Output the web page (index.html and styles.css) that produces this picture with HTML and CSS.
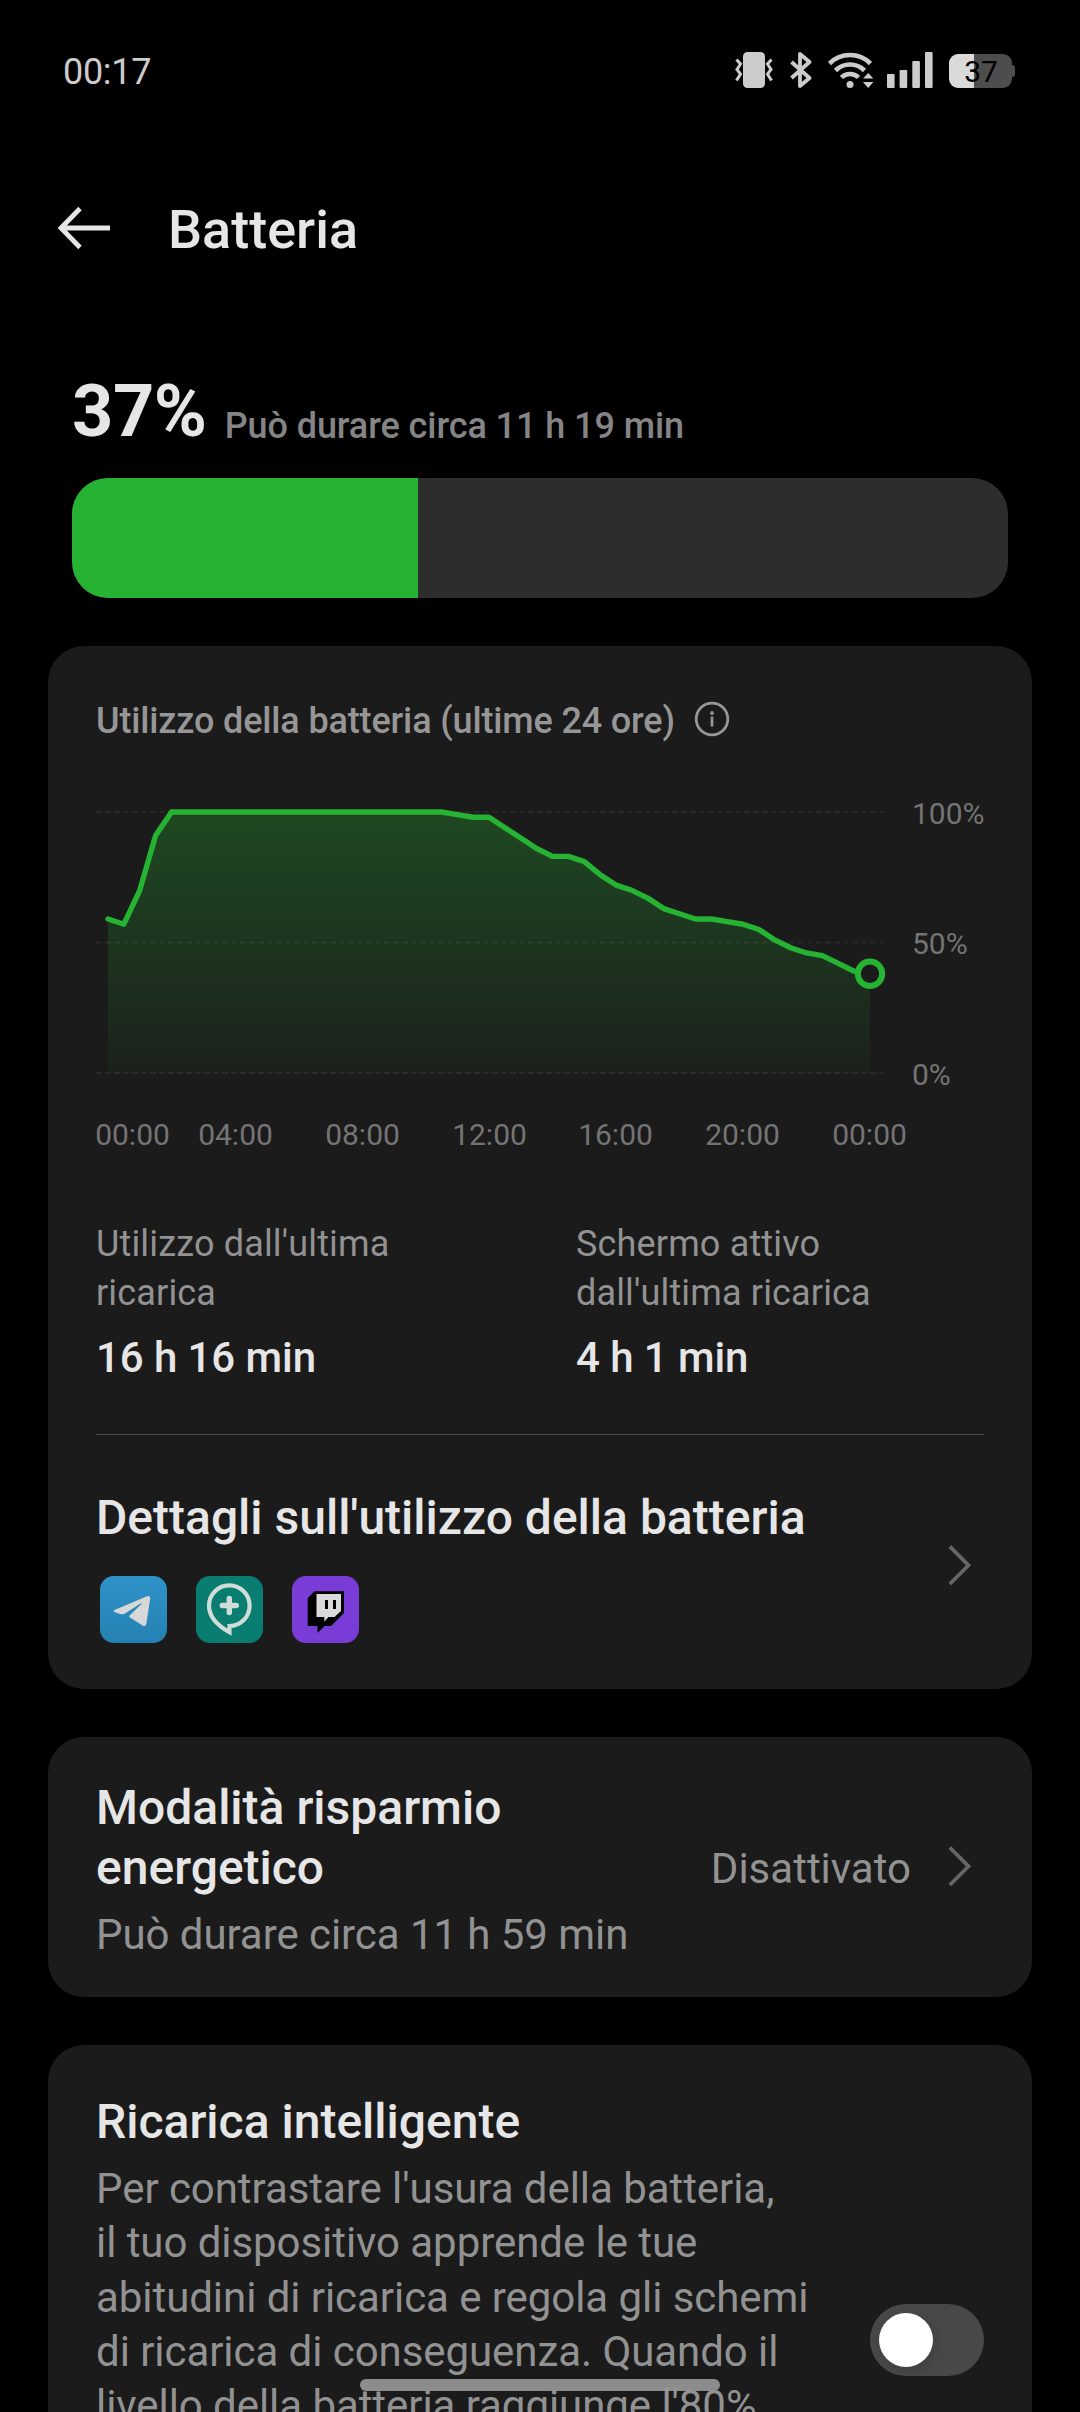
FILE: index.html
```
<!DOCTYPE html>
<html lang="it">
<head>
  <meta charset="UTF-8" />
  <meta name="viewport" content="width=device-width, initial-scale=1" />
  <title>Batteria</title>
  <link rel="stylesheet" href="styles.css">
</head>

<body>
<div class="screen">

  <!-- ========== STATUS BAR ========== -->
  <div class="status-bar">
    <span class="clock">00:17</span>
    <div class="status-icons">
      <svg class="ic-vibrate" width="38" height="36" viewBox="0 0 38 36">
        <rect x="8" y="0" width="22" height="36" rx="4.5" fill="#ccc"/>
        <path d="M1.500 7.500 L5.500 12 L2 17.500 L5.500 22 L1.500 28.500" fill="none" stroke="#ccc" stroke-width="3"/>
        <path d="M36.500 7.500 L32.500 12 L36 17.500 L32.500 22 L36.500 28.500" fill="none" stroke="#ccc" stroke-width="3"/>
      </svg>
      <svg class="ic-bluetooth" width="22" height="36" viewBox="0 0 22 36">
        <path d="M1.500 10 L19.500 26 L10 34 V2 L19.500 10 L1.500 26" fill="none" stroke="#ccc" stroke-width="3.800" stroke-linejoin="round"/>
      </svg>
      <svg class="ic-wifi" width="46" height="36" viewBox="0 0 46 36">
        <g fill="none" stroke="#ccc" stroke-width="4.600">
          <path d="M1.500 11.500 A29 29 0 0 1 42.500 11.500"/>
          <path d="M7.500 18.500 A20.500 20.500 0 0 1 36.500 18.500"/>
          <path d="M13.500 25.500 A12 12 0 0 1 30.500 25.500"/>
        </g>
        <circle cx="22" cy="32.500" r="3.500" fill="#ccc"/>
        <path d="M35 26.500 L40.200 21 L45.400 26.500Z M35 30 L40.200 36 L45.400 30Z" fill="#ccc"/>
      </svg>
      <svg class="ic-signal" width="46" height="36" viewBox="0 0 46 36" fill="#ccc">
        <rect x="0" y="22" width="7.600" height="14" rx="1"/>
        <rect x="12.600" y="18" width="7.600" height="18" rx="1"/>
        <rect x="25.300" y="9" width="7.600" height="27" rx="1"/>
        <rect x="38" y="0" width="7.600" height="36" rx="1"/>
      </svg>
      <div class="batt">
        <div class="batt-body">37</div>
        <div class="batt-cap"></div>
      </div>
    </div>
  </div>

  <!-- ========== HEADER ========== -->
  <header class="app-bar">
    <svg class="back" width="54" height="44" viewBox="0 0 54 44">
      <path d="M23 2.500 L4 22 L23 41.500 M4 22 H53" fill="none" stroke="#e6e6e6" stroke-width="4.800"/>
    </svg>
    <h1>Batteria</h1>
  </header>

  <main>
    <!-- charge level -->
    <section class="level">
      <div class="level-row">
        <span class="percent">37%</span>
        <span class="estimate">Può durare circa 11 h 19 min</span>
      </div>
      <div class="level-bar"><div class="level-fill" style="width:37%"></div></div>
    </section>

    <!-- usage card -->
    <section class="card usage">
      <div class="usage-title">
        <h2>Utilizzo della batteria (ultime 24 ore)</h2>
        <svg class="info" width="36" height="36" viewBox="0 0 36 36">
          <circle cx="18" cy="18" r="15.800" fill="none" stroke="#969696" stroke-width="2.800"/>
          <circle cx="18" cy="12" r="1.900" fill="#969696"/>
          <path d="M18 15.500 V25.500" stroke="#969696" stroke-width="2.800"/>
        </svg>
      </div>

      <svg class="chart" width="888" height="415" viewBox="0 0 888 415">
        <defs>
          <linearGradient id="fade" gradientUnits="userSpaceOnUse" x1="0" y1="67" x2="0" y2="328">
            <stop offset="0" stop-color="#26b232" stop-opacity=".3"/>
            <stop offset="1" stop-color="#26b232" stop-opacity=".04"/>
          </linearGradient>
        </defs>
        <path id="area" fill="url(#fade)"/>
        <g class="grid-lines">
          <path d="M0 67 H787"/>
          <path d="M0 197.500 H787"/>
          <path d="M0 328 H787"/>
        </g>
        <path id="line" class="line"/>
        <circle id="now" class="now" r="12.200"/>
        <g class="labels">
          <text x="816" y="79.300">100%</text>
          <text x="816" y="209.300">50%</text>
          <text x="816" y="340">0%</text>
        </g>
        <g class="labels hours">
          <text x="36.500" y="400">00:00</text>
          <text x="139.500" y="400">04:00</text>
          <text x="266.500" y="400">08:00</text>
          <text x="393.500" y="400">12:00</text>
          <text x="519.500" y="400">16:00</text>
          <text x="646.500" y="400">20:00</text>
          <text x="773.500" y="400">00:00</text>
        </g>
      </svg>

      <div class="stats">
        <div class="stat">
          <p>Utilizzo dall'ultima<br>ricarica</p>
          <strong>16 h 16 min</strong>
        </div>
        <div class="stat">
          <p>Schermo attivo<br>dall'ultima ricarica</p>
          <strong>4 h 1 min</strong>
        </div>
      </div>

      <div class="details">
        <div>
          <h3>Dettagli sull'utilizzo della batteria</h3>
          <div class="apps">
            <svg width="67" height="67" viewBox="0 0 67 67">
              <defs>
                <linearGradient id="tg" x1="0" y1="0" x2="0" y2="1">
                  <stop offset="0" stop-color="#2f93c8"/>
                  <stop offset="1" stop-color="#2581b3"/>
                </linearGradient>
              </defs>
              <rect width="67" height="67" rx="14" fill="url(#tg)"/>
              <path d="M14.500 34 L47 20.200 Q50.500 19 50.200 22.500 L46.300 48 Q45.500 51.200 42.500 49.500 L30 41.500 Q28.500 40.300 30 39 L41.500 28 Q42 26.800 40.500 27.600 L25 37.500 Q22.500 38.700 19.500 37.800 L14.500 36 Q12.800 35 14.500 34Z" fill="#d8d8d8"/>
            </svg>
            <svg width="67" height="67" viewBox="0 0 67 67">
              <rect width="67" height="67" rx="14" fill="#087d70"/>
              <path d="M33.500 56.200 C24 51 13 42 13 29.500 A20.300 20.300 0 1 1 33.500 50Z" fill="none" stroke="#d0dcd8" stroke-width="4.200"/>
              <path d="M33.300 22.500 V36.500 M26.300 29.500 H40.300" stroke="#d0dcd8" stroke-width="5.400" stroke-linecap="round"/>
            </svg>
            <svg width="67" height="67" viewBox="0 0 67 67">
              <rect width="67" height="67" rx="14" fill="#7a3cd6"/>
              <path d="M22.500 15.300 H52 V37 L39 50 H32.500 L25.500 57 V50 H15.700 V22Z" fill="#000"/>
              <path d="M24.500 18 H49 V35 L42.500 41 H36.500 L32.300 45.500 V41 H24.500Z" fill="#dadada"/>
              <path d="M34.500 24 V33 M42.500 24 V33" stroke="#000" stroke-width="3"/>
            </svg>
          </div>
        </div>
        <svg class="chevron" width="24" height="42" viewBox="0 0 24 42"><path d="M1.800 1.500 L20.500 20.300 L1.800 39"/></svg>
      </div>
    </section>

    <!-- power saving -->
    <section class="card saver">
      <div class="saver-text">
        <h3>Modalità risparmio<br>energetico</h3>
        <p>Può durare circa 11 h 59 min</p>
      </div>
      <span class="state">Disattivato</span>
      <svg class="chevron" width="24" height="42" viewBox="0 0 24 42"><path d="M1.800 1.500 L20.500 20.300 L1.800 39"/></svg>
    </section>

    <!-- smart charging -->
    <section class="card smart">
      <div class="smart-text">
        <h3>Ricarica intelligente</h3>
        <p>Per contrastare l'usura della batteria,<br>il tuo dispositivo apprende le tue<br>abitudini di ricarica e regola gli schemi<br>di ricarica di conseguenza. Quando il<br>livello della batteria raggiunge l'80%,</p>
      </div>
      <div class="toggle"><div class="knob"></div></div>
    </section>
  </main>

  <div class="home-bar"></div>
</div>

<script>
  /* battery level, one value every half hour */
  const levels = [
    59,57,70,91,100,100,100,100,100,100,100,100,100,100,100,100,100,
    100,100,100,100,100,99,98,98,94,90,86,83,83,81,76,72,70,67,63,61,
    59,59,58,57,55,51,48,46,45,42,39,38
  ];
  const x0 = 12, step = 762 / 48, bottom = 328, unit = 2.61;

  const pts = levels.map((v, i) => [x0 + i * step, bottom - v * unit]);
  const d = 'M' + pts.map(p => p.join(' ')).join('L');
  const last = pts[pts.length - 1];

  document.getElementById('line').setAttribute('d', d);
  document.getElementById('area').setAttribute('d', `${d}V${bottom}H${x0}Z`);
  document.getElementById('now').setAttribute('cx', last[0]);
  document.getElementById('now').setAttribute('cy', last[1]);
</script>
</body>
</html>
```
FILE: styles.css
```
:root{
  --green:#26b232;
  --card:#1b1b1b;
  --text:#e6e6e6;
  --muted:#929292;
}
*{box-sizing:border-box;}

body{
  margin:0;
  background:#000;
  color:var(--text);
  font-family:Roboto,"Liberation Sans",sans-serif;
}
h1,h2,h3,p{margin:0;font-weight:500;}
svg{display:block;flex-shrink:0;}

.screen{
  position:relative;
  width:1080px;
  height:2412px;
  overflow:hidden;
}

/* ---- status bar ---- */
.status-bar{
  display:flex;
  align-items:center;
  justify-content:space-between;
  height:144px;
  padding:0 65px 0 63px;
}
.clock{font-size:36px;letter-spacing:-.3px;color:#ccc;}
.status-icons{display:flex;align-items:center;padding-bottom:4px;}
.ic-vibrate{margin-right:17px;}
.ic-bluetooth{margin-right:16px;}
.ic-wifi{margin-right:13px;}
.ic-signal{margin-right:16px;}
.batt{display:flex;align-items:center;padding-top:2px;}
.batt-body{
  width:63px;
  height:34px;
  border-radius:9px;
  background:linear-gradient(90deg,#dadada 25px,#4d4d4d 25px);
  color:#000;
  font-size:30px;
  line-height:35px;
  text-align:center;
  padding-left:1px;
}
.batt-cap{width:3px;height:12px;background:#4d4d4d;border-radius:0 3px 3px 0;}

/* ---- header ---- */
.app-bar{
  display:flex;
  align-items:center;
  height:168px;
  padding-left:57px;
}
.app-bar h1{font-size:54px;padding-top:2px;margin-left:57px;}

/* ---- level ---- */
.level{padding:58px 72px 0;}
.level-row{display:flex;align-items:flex-end;height:84px;}
.percent{font-size:72px;font-weight:700;line-height:84px;letter-spacing:-.4px;}
.estimate{
  margin:0 0 7px 18px;
  font-size:36px;
  font-weight:500;
  line-height:42px;
  letter-spacing:-.08px;
  color:#858585;
}
.level-bar{
  height:120px;
  margin-top:24px;
  border-radius:36px;
  background:#2d2d2d;
  overflow:hidden;
}
.level-fill{height:100%;background:var(--green);}

/* ---- cards ---- */
.card{
  margin:48px 48px 0;
  padding:0 48px;
  border-radius:36px;
  background:var(--card);
}
.card h3{font-size:48px;line-height:60px;}
.card p{font-weight:400;color:var(--muted);}

.usage{padding-top:51px;}
.usage-title{display:flex;align-items:center;}
.usage-title h2{font-size:36px;line-height:48px;letter-spacing:-.15px;color:#969696;}
.info{margin:0 0 4px 19px;}

/* ---- chart ---- */
.grid-lines path{stroke:#fff;stroke-opacity:.06;stroke-width:2;stroke-dasharray:6 3;}
.line{fill:none;stroke:var(--green);stroke-width:5.4;stroke-linejoin:round;stroke-linecap:round;}
.now{fill:var(--card);stroke:var(--green);stroke-width:6;}
.labels{font-size:30px;fill:#747474;}
.hours{text-anchor:middle;}

/* ---- stats ---- */
.stats{
  display:flex;
  padding:60px 0 51px;
  border-bottom:1px solid #4a4a4a;
}
.stat{width:480px;flex-shrink:0;}
.stat p{font-size:36px;line-height:49px;letter-spacing:.16px;}
.stat strong{
  display:block;
  margin-top:15px;
  font-size:42px;
  font-weight:500;
  line-height:50px;
  letter-spacing:-.08px;
}

.details{
  display:flex;
  align-items:center;
  justify-content:space-between;
  padding:53px 12px 46px 0;
}
.apps{display:flex;gap:29px;margin-top:28px;padding-left:4px;}
.chevron path{fill:none;stroke:#666;stroke-width:3.8;}

/* ---- power saving ---- */
.saver{
  display:flex;
  align-items:center;
  height:260px;
  padding-right:60px;
}
.saver-text{flex:1;padding-top:6px;}
.saver p{margin-top:10px;font-size:42px;line-height:54px;letter-spacing:-.06px;}
.state{padding-top:3px;margin-right:37px;font-size:42px;color:var(--muted);}

/* ---- smart charging ---- */
.smart{
  display:flex;
  align-items:center;
  justify-content:space-between;
  height:590px;
}
.smart-text{align-self:flex-start;padding-top:47px;}
.smart p{margin-top:10px;font-size:42px;line-height:54.3px;letter-spacing:-.06px;white-space:nowrap;}
.toggle{
  width:114px;
  height:72px;
  padding:9px;
  border-radius:36px;
  background:#484848;
}
.knob{width:54px;height:54px;border-radius:50%;background:#fff;box-shadow:2px 3px 8px rgba(0,0,0,.15);}

.home-bar{
  position:absolute;
  left:360px;
  bottom:21px;
  width:360px;
  height:12px;
  border-radius:6px;
  background:rgba(153,153,153,.9);
}
```
